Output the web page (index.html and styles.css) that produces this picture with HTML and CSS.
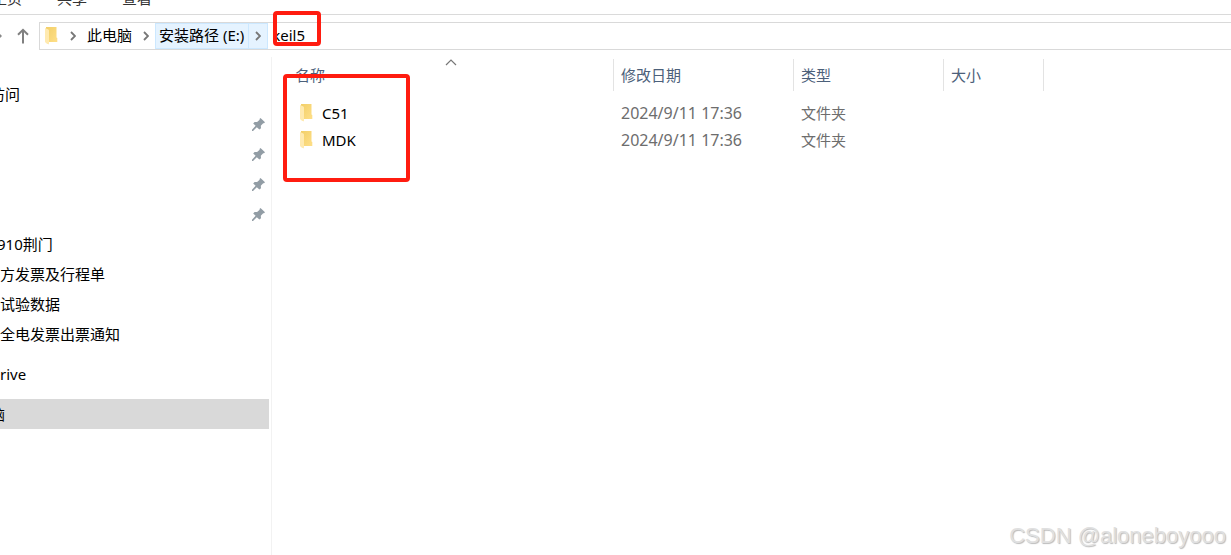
FILE: index.html
```html
<!DOCTYPE html>
<html lang="zh-CN">
<head>
<meta charset="utf-8">
<title>keil5</title>
<link rel="stylesheet" href="styles.css">
</head>
<body>
<svg class="defs" aria-hidden="true">
  <defs>
    <linearGradient id="fold" x1="0" y1="0" x2="1" y2="1"><stop offset="0" stop-color="#f2cf68"/><stop offset="1" stop-color="#ffe08a"/></linearGradient>
    <symbol id="folder" viewBox="0 0 13 18"><path d="M1 0H11.5V10.5L12.3 11V15H4V17L1 16Z" fill="url(#fold)"/><path d="M0 1L3.4 2.6Q4 3 4 4V17.6L.8 15.8Q0 15.3 0 14.5Z" fill="#ffeab0"/></symbol>
    <symbol id="chevron" viewBox="0 0 6 10"><path d="M1 1L5 5L1 9" fill="none" stroke="#777" stroke-width="1.8"/></symbol>
    <symbol id="pin" viewBox="0 0 13 13"><path d="M8.5 0L13 4.2L12 5.3L11.2 5.2L8.8 7.7L9 10.2L7.4 11.6L4.8 9.2L1 12.9L0 12.9V11.8L3.6 7.8L1.2 5.5L2.6 3.9L5.1 4L7.7 1.8L7.5 .9Z" fill="#929da5"/></symbol>
  </defs>
</svg>
<div class="window">
  <nav class="tabs"><button>主页</button><button>共享</button><button>查看</button></nav>
  <div class="toolbar">
    <button class="recent" aria-label="最近位置"><svg width="3" height="4" viewBox="0 0 3 4"><path d="M0 0L2 2L0 4Z" fill="#888"/></svg></button>
    <button class="up" aria-label="向上"><svg width="12" height="16" viewBox="0 0 12 16"><path d="M6 15.5V1.8M1 6.8L6 1.8L11 6.8" fill="none" stroke="#808080" stroke-width="2"/></svg></button>
    <div class="address">
      <svg class="folder" width="13" height="18"><use href="#folder"/></svg>
      <svg class="sep" width="6" height="10"><use href="#chevron"/></svg>
      <button class="crumb">此电脑</button>
      <svg class="sep" width="6" height="10"><use href="#chevron"/></svg>
      <div class="hot"><button class="drive">安装路径 (E:)</button><button class="arrow" aria-label="展开"><svg width="6" height="10"><use href="#chevron"/></svg></button></div>
      <button class="current">keil5</button>
    </div>
  </div>
  <div class="body">
    <aside class="sidebar">
      <div class="item cut">访问</div>
      <div class="item pinned"><svg width="13" height="13"><use href="#pin"/></svg></div>
      <div class="item pinned"><svg width="13" height="13"><use href="#pin"/></svg></div>
      <div class="item pinned"><svg width="13" height="13"><use href="#pin"/></svg></div>
      <div class="item pinned"><svg width="13" height="13"><use href="#pin"/></svg></div>
      <div class="item nudge">910荆门</div>
      <div class="item">方发票及行程单</div>
      <div class="item">试验数据</div>
      <div class="item">全电发票出票通知</div>
      <div class="item group">rive</div>
      <div class="item group selected cut">脑</div>
    </aside>
    <main class="files">
      <svg class="sort" width="12" height="7" viewBox="0 0 12 7"><path d="M1 6L6 1L11 6" fill="none" stroke="#777" stroke-width="1.2"/></svg>
      <table>
        <colgroup><col class="c-name"><col class="c-date"><col class="c-type"><col class="c-size"></colgroup>
        <thead><tr><th>名称</th><th>修改日期</th><th>类型</th><th>大小</th></tr></thead>
        <tbody>
          <tr><td><div class="name"><svg width="13" height="18"><use href="#folder"/></svg>C51</div></td><td class="date">2024/9/11 17:36</td><td>文件夹</td><td></td></tr>
          <tr><td><div class="name"><svg width="13" height="18"><use href="#folder"/></svg>MDK</div></td><td class="date">2024/9/11 17:36</td><td>文件夹</td><td></td></tr>
        </tbody>
      </table>
    </main>
  </div>
  <div class="mark mark-path"></div>
  <div class="mark mark-files"></div>
  <div class="watermark">CSDN @aloneboyooo</div>
</div>
</body>
</html>
```
FILE: styles.css
```css
* { box-sizing: border-box; }
body { margin: 0; background: #fff; color: #000; font: 15px/20px "Noto Sans", "Noto Sans CJK SC", sans-serif; }
button { margin: 0; padding: 0; border: 0; background: none; color: inherit; font: inherit; white-space: nowrap; }
svg { display: block; flex: none; }
.defs { position: absolute; width: 0; height: 0; }
.window { position: relative; display: flex; flex-direction: column; min-height: 100vh; overflow: hidden; }
.tabs { display: flex; align-items: flex-end; gap: 35px; height: 15px; margin-left: -8px; padding-bottom: 6px; border-bottom: 1px solid #dadada; color: #333; }
.toolbar { display: flex; align-items: center; height: 42px; }
.recent { width: 17px; }
.up { width: 22px; }
.address { display: flex; align-items: center; flex: 1; height: 28px; padding-left: 5px; border: 1px solid #d9d9d9; border-right: 0; }
.address button { padding-bottom: 2px; }
.sep { margin: 0 10px 0 12px; }
.crumb + .sep { margin: 0 6px 0 11px; }
.crumb { margin-left: 1px; }
.hot { display: flex; align-self: stretch; border: 1px solid #cce8ff; background: #e5f3ff; }
.drive { padding: 0 4px 0 3px; }
.address .arrow { display: grid; place-items: center; width: 19px; padding: 0; border-left: 1px solid #cce8ff; }
.current { padding-left: 4px; }
.body { display: flex; flex: 1; }
.sidebar { width: 272px; padding: 22px 2px 0 0; border-right: 1px solid #f2f2f2; }
.item { display: flex; align-items: center; height: 30px; white-space: nowrap; }
.cut { text-indent: -10px; }
.nudge { text-indent: -3px; }
.pinned { justify-content: flex-end; padding-right: 4px; }
.group { margin-top: 10px; }
.selected { background: #d9d9d9; }
.files { position: relative; flex: 1; padding: 2px 0 0 16px; }
.sort { position: absolute; top: 2px; left: 173px; }
table { width: 756px; table-layout: fixed; border-collapse: separate; border-spacing: 0; }
.c-name { width: 326px; }
.c-date { width: 180px; }
.c-type { width: 150px; }
.c-size { width: 100px; }
th { height: 32px; padding: 0 7px; border-right: 1px solid #e3e3e3; color: #4c607a; font-weight: 400; text-align: left; }
td { height: 27px; padding: 0 7px; color: #6d6d6d; }
tbody::before { content: ""; display: block; height: 8px; }
.date { font-size: 16px; }
.name { display: flex; align-items: center; gap: 9px; padding-left: 5px; color: #000; }
.mark { position: absolute; border: 4px solid #ff1c10; border-radius: 4px; }
.mark-path { top: 11px; left: 273px; width: 48px; height: 35px; }
.mark-files { top: 74px; left: 283px; width: 127px; height: 108px; }
.watermark { position: absolute; right: 5px; bottom: 6px; color: #e0e0e0; font: 22px/26px "Liberation Sans", sans-serif; text-shadow: 1px 1px 1px #bbb; }
```
